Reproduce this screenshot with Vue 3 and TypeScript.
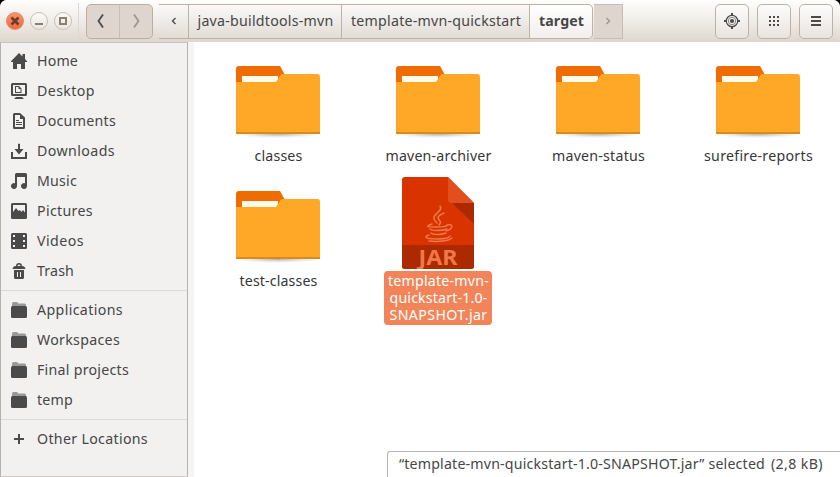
<script setup lang="ts">
interface Label { text: string; width: number }
interface Place extends Label { icon: string }

const groups: Place[][] = [
  [
    { icon: 'home', text: 'Home', width: 41 },
    { icon: 'desktop', text: 'Desktop', width: 58 },
    { icon: 'documents', text: 'Documents', width: 79 },
    { icon: 'downloads', text: 'Downloads', width: 78 },
    { icon: 'music', text: 'Music', width: 40 },
    { icon: 'pictures', text: 'Pictures', width: 56 },
    { icon: 'videos', text: 'Videos', width: 47 },
    { icon: 'trash', text: 'Trash', width: 37 },
  ],
  [
    { icon: 'folder', text: 'Applications', width: 86 },
    { icon: 'folder', text: 'Workspaces', width: 83 },
    { icon: 'folder', text: 'Final projects', width: 92 },
    { icon: 'folder', text: 'temp', width: 36 },
  ],
  [{ icon: 'plus', text: 'Other Locations', width: 111 }],
]

const folders: Label[] = [
  { text: 'classes', width: 48 },
  { text: 'maven-archiver', width: 106 },
  { text: 'maven-status', width: 93 },
  { text: 'surefire-reports', width: 109 },
  { text: 'test-classes', width: 78 },
]

const jarLines: Label[] = [
  { text: 'template-mvn-', width: 101 },
  { text: 'quickstart-1.0-', width: 98 },
  { text: 'SNAPSHOT.jar', width: 98 },
]

/* Tracks a label so that it occupies its nominal width. */
const vFit = {
  mounted(el: HTMLElement, binding: { value: number }) {
    const natural = el.getBoundingClientRect().width
    const count = (el.textContent ?? '').length
    el.style.letterSpacing = `${(binding.value - natural) / count}px`
  },
}
</script>

<template>
  <div class="window">
    <header class="header">
      <div class="controls">
        <svg class="control close" viewBox="1 1 16 16"><path d="M5.500 5.500l7 7m0-7l-7 7" /></svg>
        <svg class="control" viewBox="1 1 16 16"><path d="M5 12h8" /></svg>
        <svg class="control" viewBox="1 1 16 16"><path d="M6 6h6v6H6z" /></svg>
      </div>
      <div class="history">
        <button class="hist"><svg viewBox="0 0 12 16"><path d="M8 1.500L3.500 8 8 14.500" /></svg></button>
        <button class="hist off"><svg viewBox="0 0 12 16"><path d="M4 1.500L8.500 8 4 14.500" /></svg></button>
      </div>
      <nav class="path">
        <button class="step arrow"><svg viewBox="0 0 6 8"><path d="M4.500 1L1.500 4l3 3" /></svg></button>
        <button class="step java"><span v-fit="137">java-buildtools-mvn</span></button>
        <button class="step template"><span v-fit="171">template-mvn-quickstart</span></button>
        <button class="step current"><span v-fit="46">target</span></button>
        <button class="step next"><svg viewBox="0 0 6 8"><path d="M1.500 1l3 3-3 3" /></svg></button>
      </nav>
      <div class="tools">
        <button class="tool">
          <svg viewBox="0 0 16 16">
            <circle cx="8" cy="8" r="5.700" class="ring" />
            <circle cx="8" cy="8" r="3.700" class="ring thin" />
            <circle cx="8" cy="8" r="2.100" />
            <path d="M7 0h2v3H7zM7 13h2v3H7zM0 7h3v2H0zM13 7h3v2h-3z" />
          </svg>
        </button>
        <button class="tool">
          <svg viewBox="0 0 16 16"><path d="M3 3h2v2H3zM7 3h2v2H7zM11 3h2v2h-2zM3 7h2v2H3zM7 7h2v2H7zM11 7h2v2h-2zM3 11h2v2H3zM7 11h2v2H7zM11 11h2v2h-2z" /></svg>
        </button>
        <button class="tool">
          <svg viewBox="0 0 16 16"><path d="M3 3h10v2H3zM3 7h10v2H3zM3 11h10v2H3z" /></svg>
        </button>
      </div>
    </header>

    <div class="body">
      <aside class="sidebar">
        <ul v-for="(group, g) in groups" :key="g" class="group">
          <li v-for="place in group" :key="place.text" class="place">
            <svg class="glyph" viewBox="0 0 16 16">
              <path v-if="place.icon === 'home'" d="M8 0l3.500 3.500V1H14v5l2 2.200V9h-2v7h-4v-5H6v5H2V9H0v-.8z" />
              <g v-else-if="place.icon === 'desktop'">
                <path fill-rule="evenodd" d="M1.500 0h13Q16 0 16 1.500v10q0 1.500-1.500 1.500h-13Q0 13 0 11.500v-10Q0 0 1.500 0zM2 2v9h12V2z" />
                <path fill-rule="evenodd" d="M4 3h4l2.500 2.500V10H4zM5 4v5h4.500V6H7.500V4zM5 14h6l2 2H3z" />
              </g>
              <path v-else-if="place.icon === 'documents'" fill-rule="evenodd" d="M3.500 0H9l5 4.500v10q0 1.500-1.500 1.500h-9Q2 16 2 14.500v-13Q2 0 3.500 0zM4 2v12h8V6H9V2zM5 7h3v1H5zM5 9h6v1H5zM5 11h6v1H5z" />
              <path v-else-if="place.icon === 'downloads'" d="M7 1q1-1 2 0v5h3.500L8 11.500 3.500 6H7zM0 9h2v5h12V9h2v7H0z" />
              <path v-else-if="place.icon === 'music'" d="M4 1.500Q4 0 5.500 0h9Q16 0 16 1.500V13a3 3 0 1 1-2-2.800V4H6v9a3 3 0 1 1-2-2.800z" />
              <path v-else-if="place.icon === 'pictures'" fill-rule="evenodd" d="M1.500 0h13Q16 0 16 1.500v13q0 1.500-1.500 1.500h-13Q0 16 0 14.500v-13Q0 0 1.500 0zM2 2v7l3-4 2.500 3L9 7l1.500 2L12 7l2 2.500V2z" />
              <path v-else-if="place.icon === 'videos'" fill-rule="evenodd" d="M1.500 0h13Q16 0 16 1.500v13q0 1.500-1.500 1.500h-13Q0 16 0 14.500v-13Q0 0 1.500 0zM2 2v2h2V2zM12 2v2h2V2zM2 7v2h2V7zM12 7v2h2V7zM2 12v2h2v-2zM12 12v2h2v-2z" />
              <path v-else-if="place.icon === 'trash'" fill-rule="evenodd" d="M5 3Q5 0 8 0t3 3q3 .2 3.500 3h-13Q2 3.200 5 3zM6.500 3h3Q9.500 1.500 8 1.500T6.500 3zM3 7h10v7.500q0 1.500-1.500 1.500h-7Q3 16 3 14.500zM6 9v5h1V9zM9 9v5h1V9z" />
              <g v-else-if="place.icon === 'folder'">
                <path class="faded" d="M1 6V1.500Q1 0 2.500 0H6l1.500 1.500h6Q15 1.500 15 3v3z" />
                <path d="M1.500 4h13Q16 4 16 5.500v9q0 1.500-1.500 1.500h-13Q0 16 0 14.500v-9Q0 4 1.500 4z" />
              </g>
              <path v-else d="M7 3h2v4h4v2H9v4H7V9H3V7h4z" />
            </svg>
            <span v-fit="place.width">{{ place.text }}</span>
          </li>
        </ul>
      </aside>

      <main class="files">
        <figure v-for="folder in folders" :key="folder.text" class="file">
          <svg class="folder" viewBox="0 0 88 72">
            <defs>
              <radialGradient id="shade"><stop offset="0" stop-color="#777" stop-opacity=".6" /><stop offset="1" stop-color="#aaa" stop-opacity="0" /></radialGradient>
            </defs>
            <ellipse cx="44" cy="68" rx="44" ry="4" fill="url(#shade)" />
            <path d="M2 20V3q0-3 3-3h41l5 9-6 11z" fill="#ef6c00" />
            <path d="M8 10h36v9H8z" fill="#fffbea" />
            <path d="M2 16h40l4.500-7q.7-1 2-1H83q3 0 3 3v57H2z" fill="#ffa726" />
            <path d="M2 66h84v2H2z" fill="#d98c1c" />
          </svg>
          <figcaption class="caption"><span v-fit="folder.width">{{ folder.text }}</span></figcaption>
        </figure>
        <figure class="file selected">
          <svg class="jar" viewBox="0 0 72 92">
            <path d="M3 0h43l26 26v63q0 3-3 3H3q-3 0-3-3V3q0-3 3-3z" fill="#d93400" />
            <path d="M46 0l26 26H50q-4 0-4-4z" fill="#e34e1e" />
            <path d="M50 26h22v21z" fill="#ad2900" />
            <path d="M0 68h72v21q0 3-3 3H3q-3 0-3-3z" fill="#ad2900" />
            <g class="cup">
              <path d="M38 29c4 5-8 8-6 13 1 2 2 3 3 4M42 36c-7 3-7 5-4 8 1 1 0 3-1 4" />
              <path d="M30 47c-9 3-2 3 5 3s10-1 11-2M45 48c8-2 5 5-1 6M28 52c1 2 12 2 17 0M29 56c2 2 10 2 15 0" />
              <path d="M27 58c-13 4 19 6 21 1M27 64c9 1 20 0 23-3" />
            </g>
            <text x="36" y="88" text-anchor="middle" textLength="39" lengthAdjust="spacingAndGlyphs" class="badge">JAR</text>
          </svg>
          <figcaption class="caption chosen">
            <span v-for="line in jarLines" :key="line.text" v-fit="line.width" class="line">{{ line.text }}</span>
          </figcaption>
        </figure>
      </main>
      <footer class="status">
        <span v-fit="366">“template-mvn-quickstart-1.0-SNAPSHOT.jar” selected</span>
        <span v-fit="52">(2,8 kB)</span>
      </footer>
    </div>
  </div>
</template>

<style>
body { margin: 0; background: #000; }
</style>

<style scoped>
* { box-sizing: border-box; }
.window {
  display: flex; flex-direction: column;
  width: 840px; height: 477px; overflow: hidden;
  border-radius: 7px 7px 0 0; background: #fff;
  font: 14.200px/20px "Noto Sans", sans-serif; color: #464646;
}
.window span { white-space: nowrap; }
.header {
  display: flex; align-items: center; height: 42px; flex: none;
  padding-right: 7px;
  background: linear-gradient(#fefefd, #f0ece8 50%, #dfd6ce);
}
.controls {
  display: flex; gap: 6px; align-items: center;
  width: 79px; height: 36px; padding-left: 6px;
  border-right: 1px solid #ddd8d4;
}
.control {
  width: 18px; height: 18px; border-radius: 50%;
  border: 1px solid #c9bfb5; background: linear-gradient(#fbfaf8, #ebe5e0);
  fill: none; stroke: #8b7e72; stroke-width: 2;
}
.close { background: linear-gradient(#f69373, #ee6a3d); border-color: #e6896b; stroke: #713b22; stroke-width: 2.600; }
button { margin: 0; padding: 0; border: 0; background: none; font: inherit; color: inherit; }
button svg { display: block; }
.history {
  display: flex; width: 67px; height: 35px; margin-left: 7px;
  border: 1px solid #bcaea0; border-radius: 5px; background: #ddd5ce; overflow: hidden;
}
.hist { width: 32px; flex: none; display: grid; place-items: center; }
.hist + .hist { width: 33px; border-left: 1px solid #c9beb3; padding-left: 3px; }
.hist svg { width: 12px; height: 16px; margin-right: 4px; fill: none; stroke: #4a4a4a; stroke-width: 1.800; }
.hist.off svg { stroke: #9d9791; }
.path { display: flex; height: 35px; margin-left: 6px; }
.step {
  display: flex; align-items: center; justify-content: center;
  border: solid #bfb2a5; border-width: 1px 0; border-right-width: 1px;
  background: linear-gradient(#faf9f8, #e3dcd6);
}
.step span { padding-left: 1px; }
.step svg { width: 6px; height: 8px; fill: none; stroke: #4a4a4a; stroke-width: 1.400; }
.arrow { width: 30px; }
.java { width: 153px; }
.template { width: 188px; }
.current { width: 63px; border-radius: 0 5px 5px 0; background: linear-gradient(#fff, #f2efed); font-weight: 700; }
.next { width: 29px; margin-left: 1px; background: #ddd5ce; border-color: #c8bdb2; }
.next svg { stroke: #9d9791; }
.tools { display: flex; gap: 8px; margin-left: auto; }
.tool {
  display: grid; place-items: center; width: 34px; height: 35px;
  border: 1px solid #bfb2a5; border-radius: 5px; background: linear-gradient(#fdfcfc, #e9e3de);
}
.tool svg { width: 16px; height: 16px; fill: #4a4a4a; }
.tool svg .ring { fill: none; stroke: #4a4a4a; stroke-width: 1.200; }
.tool svg .thin { stroke: #888; stroke-width: 1; }
.body { position: relative; display: flex; flex: 1; min-height: 0; background: #f5f4f3; }
.sidebar {
  width: 188px; flex: none; padding-top: 3px; margin-right: 6px;
  border: 1px solid #b5b1ac; border-top-color: #c9c4bf; border-bottom-color: #cfcac6; background: #f2f1f0;
}
.group { margin: 0; padding: 0; list-style: none; }
.group + .group { border-top: 1px solid #dcdad7; margin-top: 4px; padding-top: 4px; }
.place { display: flex; align-items: center; height: 30px; padding-left: 10px; gap: 10px; }
.glyph { width: 16px; height: 16px; flex: none; fill: #4a4a4a; }
.faded { fill: #999; }
.files {
  flex: 1; display: grid; grid-template-columns: repeat(4, 160px); grid-auto-rows: 125px; align-content: start;
  padding: 10px 0 0 4px; background: #fff;
}
.file { margin: 0; display: flex; flex-direction: column; align-items: center; padding-top: 14px; }
.folder { width: 88px; height: 72px; flex: none; }
.caption { margin-top: 8px; padding-left: 1px; line-height: 20px; color: #363636; }
.selected { padding-top: 0; }
.jar { width: 72px; height: 92px; flex: none; }
.cup { fill: none; stroke: #ef7748; stroke-width: 1.500; stroke-linecap: round; }
.badge { fill: #ef7748; font: 700 21.500px "Noto Sans", sans-serif; }
.chosen {
  display: flex; flex-direction: column; align-items: center; flex: none;
  width: 108px; height: 54px; margin-top: 2px; padding-top: 1px;
  border-radius: 4px; background: #f28459; color: #fff; line-height: 17px;
}
.line { display: block; height: 17px; }
.status {
  position: absolute; right: 0; bottom: 0; display: flex; gap: 6px;
  width: 453px; height: 26px; padding: 2px 0 0 11px;
  border: 1px solid #b8b8b8; border-width: 1px 0 0 1px; border-top-left-radius: 3px; background: #fff;
}
</style>
